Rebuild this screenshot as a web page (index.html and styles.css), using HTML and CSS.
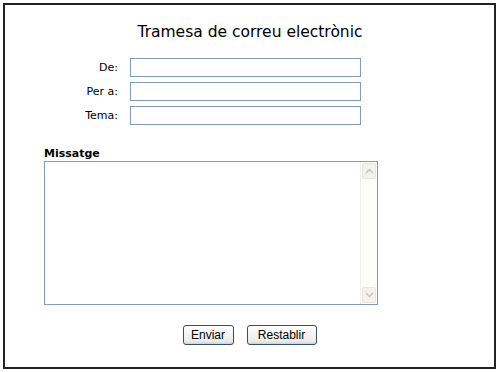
FILE: index.html
```html
<!DOCTYPE html>
<html lang="ca">
<head>
  <meta charset="UTF-8" />
  <title>Tramesa de correu electrònic</title>
  <link rel="stylesheet" href="styles.css">
</head>
<body>
  <div class="frame">
    <h1 class="title">Tramesa de correu electrònic</h1>

    <form class="mail-form">
      <div class="fields">
        <div class="row">
          <label for="de">De:</label>
          <input type="text" id="de" />
        </div>
        <div class="row">
          <label for="pera">Per a:</label>
          <input type="text" id="pera" />
        </div>
        <div class="row">
          <label for="tema">Tema:</label>
          <input type="text" id="tema" />
        </div>
      </div>

      <div class="message">
        <label for="missatge" class="message-label">Missatge</label>
        <div class="message-box">
          <textarea id="missatge"></textarea>
          <div class="scrollbar">
            <span class="scroll-btn">
              <svg width="9" height="6" viewBox="0 0 9 6"><path d="M1 5 L4.5 1.5 L8 5" fill="none" stroke="#c9c7ba" stroke-width="1.5"/></svg>
            </span>
            <span class="scroll-btn">
              <svg width="9" height="6" viewBox="0 0 9 6"><path d="M1 1 L4.5 4.5 L8 1" fill="none" stroke="#c9c7ba" stroke-width="1.5"/></svg>
            </span>
          </div>
        </div>
      </div>

      <div class="buttons">
        <button type="submit" class="btn btn-send">Enviar</button>
        <button type="reset" class="btn btn-reset">Restablir</button>
      </div>
    </form>
  </div>
</body>
</html>
```

FILE: styles.css
```css
body {
  margin: 0;
  background: #fff;
  font-family: 'DejaVu Sans', Verdana, sans-serif;
  color: #000;
}

.frame {
  margin: 3px;
  width: 493px;
  height: 366px;
  box-sizing: border-box;
  border: 2px solid #222;
  padding-top: 17px;
}

.title {
  margin: 0;
  text-align: center;
  font-size: 15.5px;
  font-weight: normal;
  line-height: 20px;
  padding-left: 1px;
}

.fields {
  display: flex;
  flex-direction: column;
  gap: 5px;
  margin-top: 16px;
}

.row {
  display: flex;
  align-items: center;
}

.row label {
  width: 113px;
  text-align: right;
  font-size: 11px;
  margin-right: 12px;
}

.row input {
  width: 231px;
  height: 19px;
  box-sizing: border-box;
  border: 1px solid #7f9db9;
  padding: 0 2px;
  margin: 0;
  font-size: 11px;
}

.message {
  margin-top: 22px;
  padding-left: 39px;
}

.message-label {
  display: block;
  font-size: 11px;
  font-weight: bold;
  line-height: 13px;
}

.message-box {
  display: flex;
  width: 334px;
  height: 144px;
  box-sizing: border-box;
  border: 1px solid #7f9db9;
  margin-top: 1px;
}

.message-box textarea {
  flex: 1;
  border: none;
  margin: 0;
  padding: 2px;
  resize: none;
  outline: none;
  font-family: inherit;
  font-size: 11px;
}

.scrollbar {
  width: 16px;
  background: #fcfcf8;
  border-left: 1px solid #f0efe8;
  display: flex;
  flex-direction: column;
  justify-content: space-between;
  padding: 1px 0;
}

.scroll-btn {
  display: flex;
  align-items: center;
  justify-content: center;
  height: 14px;
  margin: 0 1px;
  background: #f3f2ec;
  border: 1px solid #e8e6dc;
  border-radius: 2px;
}

.buttons {
  display: flex;
  justify-content: center;
  gap: 13px;
  margin-top: 20px;
}

.btn {
  height: 20px;
  box-sizing: border-box;
  border: 1px solid #2f4f7a;
  border-radius: 3px;
  background: linear-gradient(#ffffff, #ecebe6 85%, #d6d0c5);
  font-family: 'Liberation Sans', Arial, sans-serif;
  font-size: 12px;
  color: #000;
  padding: 0;
}

.btn-send {
  width: 51px;
}

.btn-reset {
  width: 70px;
}
```
